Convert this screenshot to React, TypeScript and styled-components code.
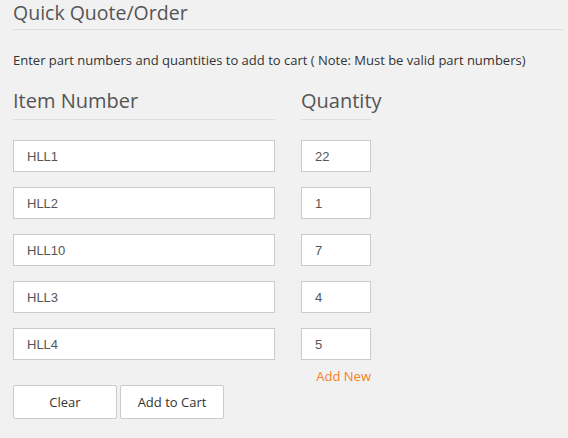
import styled, { createGlobalStyle } from "styled-components";

const Global = createGlobalStyle`
  html, body {
    margin: 0;
    padding: 0;
    background: #f1f1f1;
  }
  body {
    font-family: "Open Sans", "Liberation Sans", sans-serif;
    color: #333;
  }
`;

const Page = styled.div`
  padding: 0 5px 0 13px;
`;

const Title = styled.h2`
  margin: 0;
  box-sizing: border-box;
  height: 30px;
  padding-top: 2px;
  font-size: 19.5px;
  font-weight: 400;
  line-height: 22px;
  color: #555;
  border-bottom: 1px solid #dcdcdc;
`;

const Note = styled.p`
  margin: 21px 0 0;
  font-size: 13px;
  line-height: 18px;
  color: #333;
`;

const Form = styled.div`
  display: flex;
  gap: 26px;
  margin-top: 19px;
`;

const Column = styled.div<{ $w: number }>`
  width: ${(p) => p.$w}px;
  display: flex;
  flex-direction: column;
`;

const Heading = styled.div`
  font-size: 20px;
  line-height: 26px;
  color: #555;
  padding-bottom: 5px;
  border-bottom: 1px solid #dcdcdc;
  margin-bottom: 20px;
  white-space: nowrap;
`;

const Field = styled.input`
  box-sizing: border-box;
  width: 100%;
  height: 32px;
  margin-bottom: 15px;
  padding: 0 13px;
  border: 1px solid #cbcbcb;
  background: #fff;
  font-family: "Liberation Sans", Arial, sans-serif;
  font-size: 13px;
  color: #555;
  outline: none;
`;

const AddNew = styled.a`
  align-self: flex-end;
  margin-top: -8px;
  font-size: 13px;
  line-height: 18px;
  color: #f7801e;
  text-decoration: none;
  cursor: pointer;
`;

const Actions = styled.div`
  display: flex;
  gap: 3px;
`;

const Button = styled.button`
  width: 104px;
  height: 34px;
  border: 1px solid #cbcbcb;
  border-radius: 2px;
  background: #fff;
  font-family: "Open Sans", "Liberation Sans", sans-serif;
  font-size: 13px;
  color: #333;
  cursor: pointer;
`;

const rows = [
  { item: "HLL1", qty: "22" },
  { item: "HLL2", qty: "1" },
  { item: "HLL10", qty: "7" },
  { item: "HLL3", qty: "4" },
  { item: "HLL4", qty: "5" },
];

export default function App() {
  return (
    <>
      <Global />
      <Page>
        <Title>Quick Quote/Order</Title>
        <Note>
          Enter part numbers and quantities to add to cart ( Note: Must be valid
          part numbers)
        </Note>
        <Form>
          <Column $w={262}>
            <Heading>Item Number</Heading>
            {rows.map((r) => (
              <Field key={r.item} defaultValue={r.item} />
            ))}
          </Column>
          <Column $w={70}>
            <Heading>Quantity</Heading>
            {rows.map((r) => (
              <Field key={r.item} defaultValue={r.qty} />
            ))}
            <AddNew>Add New</AddNew>
          </Column>
        </Form>
        <Actions>
          <Button>Clear</Button>
          <Button>Add to Cart</Button>
        </Actions>
      </Page>
    </>
  );
}
